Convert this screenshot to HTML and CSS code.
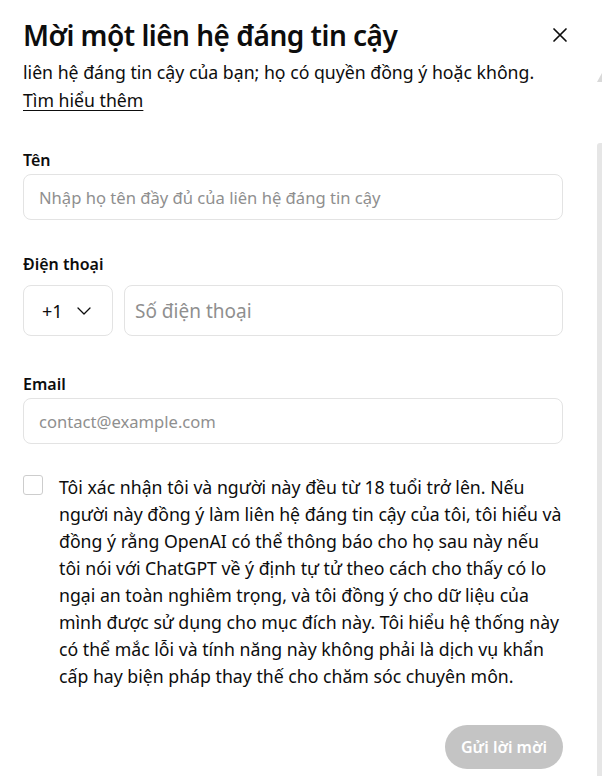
FILE: index.html
```html
<!DOCTYPE html>
<html lang="vi">
<head>
<meta charset="utf-8">
<title>Mời một liên hệ đáng tin cậy</title>
<link rel="stylesheet" href="styles.css">
</head>
<body>
<div class="dialog">
  <header class="dialog-header">
    <h1 class="title">Mời một liên hệ đáng tin cậy</h1>
    <button class="close" aria-label="Đóng">
      <svg width="16" height="16" viewBox="0 0 16 16" fill="none" stroke="#0d0d0d" stroke-width="1.7" stroke-linecap="round"><path d="M2 2L14 14M14 2L2 14"/></svg>
    </button>
  </header>
  <div class="dialog-body">
    <p class="intro">liên hệ đáng tin cậy của bạn; họ có quyền đồng ý hoặc không.<br><a href="#" class="link">Tìm hiểu thêm</a></p>

    <div class="field">
      <label class="label">Tên</label>
      <div class="input">Nhập họ tên đầy đủ của liên hệ đáng tin cậy</div>
    </div>

    <div class="field">
      <label class="label">Điện thoại</label>
      <div class="phone-row">
        <div class="select">+1
          <svg width="14" height="8" viewBox="0 0 14 8" fill="none" stroke="#0d0d0d" stroke-width="1.3" stroke-linecap="round" stroke-linejoin="round"><path d="M1 1L7 7L13 1"/></svg>
        </div>
        <div class="input tall">Số điện thoại</div>
      </div>
    </div>

    <div class="field email">
      <label class="label">Email</label>
      <div class="input">contact@example.com</div>
    </div>

    <div class="consent">
      <span class="checkbox"></span>
      <p class="consent-text">Tôi xác nhận tôi và người này đều từ 18 tuổi trở lên. Nếu<br>người này đồng ý làm liên hệ đáng tin cậy của tôi, tôi hiểu và<br>đồng ý rằng OpenAI có thể thông báo cho họ sau này nếu<br>tôi nói với ChatGPT về ý định tự tử theo cách cho thấy có lo<br>ngại an toàn nghiêm trọng, và tôi đồng ý cho dữ liệu của<br>mình được sử dụng cho mục đích này. Tôi hiểu hệ thống này<br>có thể mắc lỗi và tính năng này không phải là dịch vụ khẩn<br>cấp hay biện pháp thay thế cho chăm sóc chuyên môn.</p>
    </div>

    <div class="actions">
      <button class="submit">Gửi lời mời</button>
    </div>
  </div>
  <div class="scrollbar">
    <span class="arrow"></span>
    <span class="thumb"></span>
  </div>
</div>
</body>
</html>
```

FILE: styles.css
```css
* { box-sizing: border-box; }
html, body { margin: 0; padding: 0; background: #fff; }
body {
  font-family: "Noto Sans", "Open Sans", sans-serif;
  color: #0d0d0d;
}
.dialog {
  position: relative;
  width: 602px;
  height: 776px;
  overflow: hidden;
  background: #fff;
}
.dialog-header {
  display: flex;
  align-items: center;
  justify-content: space-between;
  padding: 16px 34px 0 23px;
}
.title {
  margin: 0;
  font-size: 28px;
  line-height: 38px;
  font-weight: 600;
  letter-spacing: -0.5px;
}
.close {
  border: 0;
  background: none;
  padding: 0;
  width: 16px;
  height: 16px;
  display: flex;
}
.dialog-body {
  padding: 4px 39px 0 23px;
}
.intro {
  margin: 0;
  font-size: 17.7px;
  line-height: 28px;
}
.link {
  color: #0d0d0d;
  text-decoration: underline;
  text-underline-offset: 3px;
}
.field {
  margin-top: 32px;
}
.intro + .field { margin-top: 34px; }
.field.email { margin-top: 36px; }
.label {
  display: block;
  font-size: 16px;
  line-height: 24px;
  font-weight: 600;
  margin-bottom: 2px;
}
.input {
  height: 46px;
  border: 1px solid #e3e3e3;
  border-radius: 8px;
  padding: 0 15px;
  display: flex;
  align-items: center;
  font-size: 16.6px;
  color: #8f8f8f;
}
.phone-row {
  display: flex;
  gap: 11px;
  margin-top: 9px;
}
.input.tall {
  flex: 1;
  height: 51px;
  padding-left: 10px;
  font-size: 19px;
}
.select {
  width: 90px;
  height: 51px;
  border: 1px solid #e3e3e3;
  border-radius: 8px;
  display: flex;
  align-items: center;
  gap: 14px;
  padding-left: 18px;
  font-size: 18px;
  color: #0d0d0d;
}
.consent {
  display: flex;
  gap: 16px;
  margin-top: 30px;
}
.checkbox {
  flex: none;
  width: 20px;
  height: 20px;
  border: 1px solid #cdcdcd;
  border-radius: 3px;
  margin-top: 1px;
}
.consent-text {
  margin: 0;
  font-size: 17.7px;
  line-height: 27px;
  white-space: nowrap;
}
.actions {
  display: flex;
  justify-content: flex-end;
  margin-top: 35px;
}
.submit {
  border: 0;
  background: #c4c4c4;
  color: #fff;
  font-family: inherit;
  font-size: 16px;
  font-weight: 600;
  height: 44px;
  padding: 0 16px;
  border-radius: 22px;
}
.scrollbar {
  position: absolute;
  top: 0;
  right: 0;
  width: 6px;
  height: 776px;
}
.arrow {
  position: absolute;
  left: 1px;
  top: 73px;
  width: 0;
  height: 0;
  border-left: 5px solid transparent;
  border-right: 5px solid transparent;
  border-bottom: 9px solid #d9d9d9;
}
.thumb {
  position: absolute;
  left: 1px;
  top: 143px;
  bottom: 0;
  width: 10px;
  background: #e6e6e6;
  border-radius: 3px 3px 0 0;
}
```
